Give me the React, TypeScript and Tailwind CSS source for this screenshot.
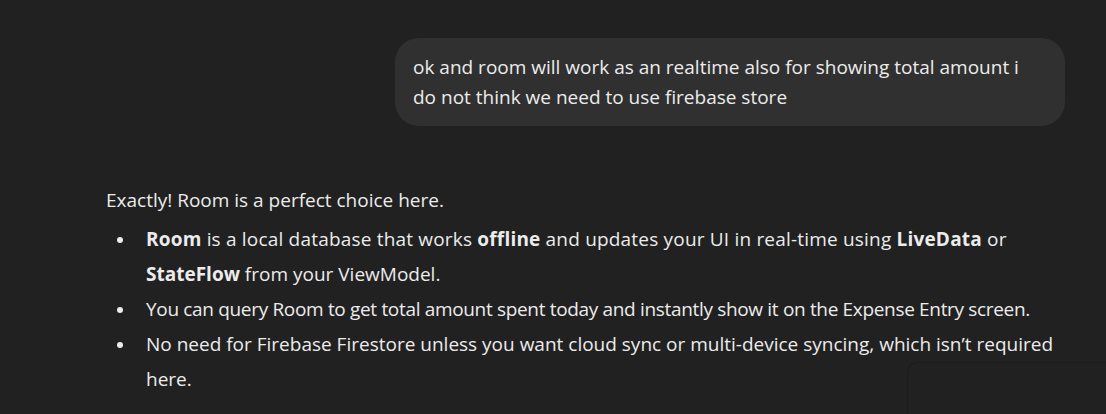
export default function App() {
  const font = { fontFamily: '"Open Sans", "Noto Sans", sans-serif' };
  const Dot = () => (
    <span className="w-[40px] shrink-0 flex items-start">
      <span className="ml-[11px] mt-[15px] w-[6px] h-[6px] rounded-full bg-[#ececec]" />
    </span>
  );
  return (
    <div className="w-[1106px] h-[414px] bg-[#212121] text-[#ececec] overflow-hidden relative" style={font}>
      <div className="flex justify-end pt-[38px] pr-[41px]">
        <div className="w-[670px] bg-[#303030] rounded-[24px] pl-[18px] pr-[20px] pt-[14px] pb-[14px] text-[19px] leading-[30px] whitespace-nowrap">
          ok and room will work as an realtime also for showing total amount i
          <br />
          do not think we need to use firebase store
        </div>
      </div>
      <div className="pl-[106px] pt-[57px] text-[19px] leading-[35px]">
        <p>Exactly! Room is a perfect choice here.</p>
        <ul className="whitespace-nowrap mt-[4px]">
          <li className="flex">
            <Dot />
            <div>
              <span className="tracking-[0.19px]">
                <b>Room</b> is a local database that works <b>offline</b> and updates your UI in real-time using <b>LiveData</b> or
              </span>
              <br />
              <b>StateFlow</b> from your ViewModel.
            </div>
          </li>
          <li className="flex">
            <Dot />
            <div className="tracking-[-0.33px]">
              You can query Room to get total amount spent today and instantly show it on the Expense Entry screen.
            </div>
          </li>
          <li className="flex">
            <Dot />
            <div>
              No need for Firebase Firestore unless you want cloud sync or multi-device syncing, which isn’t required
              <br />
              here.
            </div>
          </li>
        </ul>
      </div>
      <div className="absolute left-[907px] top-[362px] w-[240px] h-[80px] rounded-tl-[10px] border-l border-t border-[#1c1c1c]" />
    </div>
  );
}
